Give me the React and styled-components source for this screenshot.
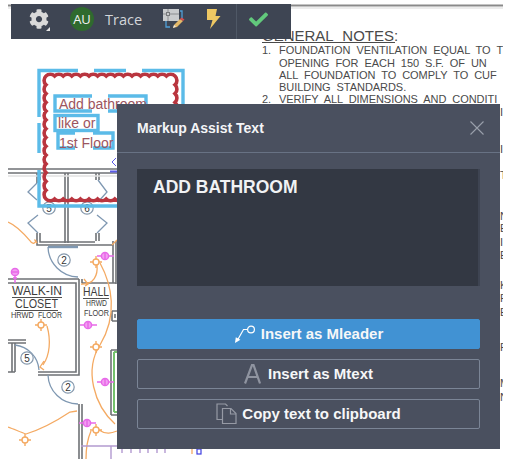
import React from "react";
import styled, { createGlobalStyle } from "styled-components";
import { FaCog, FaCheck } from "react-icons/fa";

const GlobalStyle = createGlobalStyle`
  html, body {
    margin: 0;
    padding: 0;
    background: #ffffff;
    font-family: "Liberation Sans", Arial, sans-serif;
  }
`;

const Page = styled.div`
  position: relative;
  width: 525px;
  height: 459px;
  overflow: hidden;
  background: #ffffff;
`;

const Sheet = styled.svg`
  display: block;
  width: 525px;
  height: 459px;
`;

const Toolbar = styled.div`
  position: absolute;
  left: 11px;
  top: 4px;
  width: 280px;
  height: 35px;
  display: flex;
  align-items: stretch;
  background: #3e4553;
`;

const ToolSlot = styled.div`
  position: relative;
  display: flex;
  align-items: center;
  justify-content: center;
  flex: none;
  width: ${(p) => p.$width}px;
  padding-bottom: 5px;
  box-sizing: border-box;
`;

const Caret = styled.span`
  position: absolute;
  right: 17px;
  bottom: 8px;
  width: 0;
  height: 0;
  border-left: 4px solid transparent;
  border-bottom: 4px solid #e4e4e4;
`;

const Avatar = styled.div`
  width: 24px;
  height: 24px;
  border-radius: 50%;
  background: #2f6a2e;
  color: #f2f2f2;
  font-family: "Open Sans", sans-serif;
  font-size: 13px;
  line-height: 24px;
  text-align: center;
`;

const TraceLabel = styled.span`
  font-family: "Open Sans", sans-serif;
  font-size: 14.5px;
  color: #d3d6da;
`;

const ToolDivider = styled.div`
  flex: none;
  width: 1px;
  margin-left: 8px;
  background: #4f5866;
`;

const Dialog = styled.div`
  position: absolute;
  left: 117px;
  top: 104px;
  width: 383px;
  height: 345px;
  display: flex;
  flex-direction: column;
  background: #4a505f;
`;

const DialogHeader = styled.div`
  display: flex;
  align-items: center;
  justify-content: space-between;
  height: 49px;
  padding: 0 16px 0 20px;
  box-sizing: border-box;
  border-bottom: 1px solid #687284;
  flex: none;
`;

const DialogTitle = styled.div`
  font-size: 14px;
  font-weight: 700;
  color: #f4f5f7;
`;

const DialogBody = styled.div`
  display: flex;
  flex-direction: column;
  padding: 16px 20px 0;
`;

const NoteText = styled.div`
  height: 117px;
  box-sizing: border-box;
  padding: 8px 16px;
  margin-bottom: 33px;
  background: #333843;
  border-right: 2px solid #3e4452;
  font-size: 17.5px;
  font-weight: 700;
  line-height: 20px;
  color: #f1f2f4;
`;

const ActionList = styled.div`
  display: flex;
  flex-direction: column;
  gap: 10px;
`;

const ActionButton = styled.button`
  display: flex;
  align-items: center;
  justify-content: center;
  gap: ${(p) => p.$gap}px;
  height: 30px;
  padding: 0 0 1px;
  box-sizing: border-box;
  border-radius: 2px;
  border: 1px solid ${(p) => (p.$primary ? "#4192d3" : "#7b8596")};
  background: ${(p) => (p.$primary ? "#4192d3" : "transparent")};
  color: #f6f7f8;
  font-family: "Liberation Sans", Arial, sans-serif;
  font-size: 15px;
  font-weight: 700;
`;

const WIRE = "#f4aa63";
const WALL = "#6f7276";
const DOOR = "#7f98b2";
const PINK = "#e76ae8";
const CAD = "#3d3d3d";
const NOTE_INK = "#4a4a4a";

// scalloped revision cloud, built edge by edge
const cloudPath = (x0, y0, x1, y1, step) => {
  let d = `M${x0} ${y0}`;
  const edge = (fx, fy, tx, ty) => {
    const len = Math.hypot(tx - fx, ty - fy);
    const n = Math.round(len / step);
    for (let i = 1; i <= n; i++) {
      const px = fx + ((tx - fx) * i) / n;
      const py = fy + ((ty - fy) * i) / n;
      d += ` A${step * 0.7} ${step * 0.7} 0 0 1 ${px.toFixed(1)} ${py.toFixed(1)}`;
    }
  };
  edge(x0, y0, x1, y0);
  edge(x1, y0, x1, y1);
  edge(x1, y1, x0, y1);
  edge(x0, y1, x0, y0);
  return d;
};

const NOTES = [
  { n: "1.", text: "FOUNDATION VENTILATION EQUAL TO T", y: 54 },
  { text: "OPENING FOR EACH 150 S.F. OF UN", y: 67 },
  { text: "ALL FOUNDATION TO COMPLY TO CUF", y: 79 },
  { text: "BUILDING STANDARDS.", y: 91 },
  { n: "2.", text: "VERIFY ALL DIMENSIONS AND CONDITI", y: 103 },
];

const EDGE_LETTERS = [
  ["I", 116], ["I", 153], ["T", 179], ["N", 220], ["E", 232], ["I", 246], ["E", 259],
  ["K", 289], ["F", 302], ["E", 316], ["F", 351], ["M", 387], ["N", 401],
];

const Node = ({ x, y }) => (
  <g stroke={WIRE} strokeWidth="1.4" fill="#fff">
    <path d={`M${x - 6} ${y}h12M${x} ${y - 6}v12`} />
    <circle cx={x} cy={y} r="3" />
  </g>
);

const Tag = ({ x, y, children }) => (
  <g>
    <circle cx={x} cy={y} r="6.2" fill="#fff" stroke="#8598ac" strokeWidth="1.2" />
    <text x={x} y={y + 3.5} fontSize="10" textAnchor="middle" fill="#333">{children}</text>
  </g>
);

const Fixture = ({ x, y, vertical }) => (
  <g stroke={PINK} strokeWidth="1.5" fill="none">
    <circle cx={x} cy={y} r="3.6" fill="#f39df3" />
    {vertical ? (
      <path d={`M${x - 3.5} ${y}h7M${x} ${y + 3}v8M${x - 2} ${y + 6}h4`} />
    ) : (
      <path d={`M${x} ${y - 3.5}v7M${x + 3} ${y}h6M${x - 8} ${y}h5`} />
    )}
  </g>
);

const CadLabel = ({ x, y, size, width, underline, children }) => (
  <g>
    <text
      x={x}
      y={y}
      fontSize={size}
      fill={CAD}
      textLength={width}
      lengthAdjust="spacingAndGlyphs"
    >
      {children}
    </text>
    {underline && <path d={`M${x} ${y + 2.5}h${width}`} stroke={CAD} strokeWidth="0.9" />}
  </g>
);

const FloorPlan = () => (
  <Sheet viewBox="0 0 525 459" fontFamily="'Liberation Sans', Arial, sans-serif">
    <defs>
      <clipPath id="sheet-clip">
        <rect x="8" y="0" width="495" height="459" />
      </clipPath>
    </defs>
    <g clipPath="url(#sheet-clip)">
      <path d="M8 5.5H503" stroke="#8a8a8a" strokeWidth="2" />
      <path d="M8 8H503" stroke="#e6e6e6" strokeWidth="1.5" />

      {/* general notes */}
      <text x="262" y="41" fontSize="15" fill={NOTE_INK} wordSpacing="5">
        GENERAL NOTES:
      </text>
      <path d="M262 42.5H395" stroke={NOTE_INK} strokeWidth="1" />
      {NOTES.map((line) => (
        <g key={line.y} fill={NOTE_INK} fontSize="11">
          {line.n && <text x="262" y={line.y}>{line.n}</text>}
          <text x="279" y={line.y} letterSpacing="-0.05" wordSpacing="3">{line.text}</text>
        </g>
      ))}
      {EDGE_LETTERS.map(([ch, y]) => (
        <text key={y} x="500" y={y} fontSize="11" fill={NOTE_INK}>{ch}</text>
      ))}

      {/* walls */}
      <g stroke={WALL} fill="none" strokeWidth="1.6">
        <path d="M8 169H117M8 173H117" />
        <path d="M65 173V243M68 173V243" />
        <path d="M37 173V183M40 173V180M96 173V180M99 173V180" />
        <path d="M37 233V245H113M40 233V242H95" />
        <path d="M96 233V241M99 233V241M113 241V283M116 241V284" />
        <path d="M8 279H79M8 283H76V372H38" />
        <path d="M79 279V375H38M82 283H116M82 279V283" />
        <path d="M8 340H26M8 343H26M12 343V372M15 343V372M8 372H15" />
        <path d="M79 404V459M82 404V459" />
        <path d="M112 311H117M112 321H117M112 311V321M115 314V318" />
        <path d="M111 350V415M111 350H117M111 415H117" />
      </g>
      <path d="M8 176H117" stroke="#e2e2e2" strokeWidth="1.5" />
      <path d="M114 352V412M114 352H117M114 412H117" stroke="#74c26c" strokeWidth="2" fill="none" />

      {/* doors */}
      <g stroke={DOOR} fill="none" strokeWidth="1.3">
        <path d="M37 183L28 192L37 200M98 180L107 192L98 202" />
        <path d="M38 215L28 223L38 233M97 215L107 223L97 233" />
        <path d="M48 247A31 31 0 0 0 78 277" />
        <path d="M15 345A27 27 0 0 1 39 370" />
        <path d="M48 375A30 30 0 0 0 78 404" />
        <path d="M48 247H78" strokeWidth="2.4" />
      </g>
      <Tag x={87} y={208}>6</Tag>
      <Tag x={49} y={208}>5</Tag>
      <Tag x={64} y={260}>2</Tag>
      <Tag x={27} y={358}>5</Tag>
      <Tag x={68} y={387}>2</Tag>

      {/* circuit wires */}
      <g stroke={WIRE} strokeWidth="1.3" fill="none">
        <path d="M8 222C18 226 26 236 31 242Q34 245 36 241Q33 238 37 243" />
        <path d="M97 265C98 275 94 285 81 284M84 279L88 284L85 286" />
        <path d="M100 263C112 285 118 315 100 345C84 370 94 405 115 424" />
        <path d="M47 326C51 340 50 355 43 365M44 361L40 367L44 370" />
        <path d="M8 427C14 429 20 432 26 434C42 429 58 420 70 412L77 411" />
        <path d="M99 430C106 435 112 433 117 431M91 431C87 440 86 450 86 459" />
        <path d="M192 449V454" />
        <path d="M112 245L117 240" />
      </g>
      <Node x={96} y={262} />
      <Node x={41} y={325} />
      <Node x={96} y={347} />
      <Node x={25} y={440} />
      <Node x={96} y={430} />

      <Fixture x={15} y={272} vertical />
      <Fixture x={88} y={325} />
      <Fixture x={105} y={256} />
      <Fixture x={105} y={382} />
      <Fixture x={87} y={423} />

      <path d="M81 446H117M111 446V459" stroke="#b39ad0" strokeWidth="1.4" fill="none" />
      <path d="M122 449v4M131 449v4M140 449v4M148 449v4M157 449v4M165 449v4" stroke="#b39ad0" strokeWidth="1.4" />
      <rect x="197" y="449" width="4" height="5" fill="none" stroke="#3f3fe0" strokeWidth="1.2" />
      <path d="M110 171.5H117" stroke="#5a5ae8" strokeWidth="2" />
      <path d="M116 158L112 162L116 166" stroke="#5a5ae8" strokeWidth="1" fill="none" />

      {/* room labels */}
      <CadLabel x={12} y={295} size={12.5} width={50} underline>WALK-IN</CadLabel>
      <CadLabel x={15} y={308} size={12.5} width={43} underline>CLOSET</CadLabel>
      <CadLabel x={11} y={318} size={9} width={23}>HRWD</CadLabel>
      <CadLabel x={38} y={318} size={9} width={24}>FLOOR</CadLabel>
      <CadLabel x={83} y={296} size={12.5} width={26} underline>HALL</CadLabel>
      <CadLabel x={86} y={306} size={9} width={21}>HRWD</CadLabel>
      <CadLabel x={84} y={316} size={9} width={25}>FLOOR</CadLabel>

      {/* markup: selection frames, cloud and note */}
      <path d={cloudPath(46, 76, 175, 199, 8.6)} fill="none" stroke="#b9353f" strokeWidth="3.6" />
      <path
        d="M39 117V70.5H78M94 70.5H126M142 70.5H183V104M39 123V153M39 170V206H117"
        fill="none"
        stroke="#5bbbe8"
        strokeWidth="3.4"
      />
      <g fill="none" stroke="#5bbbe8" strokeWidth="3.4">
        <path d="M92 96H55V111H92M108 96H146V111H108" />
        <rect x="55" y="115.5" width="43" height="15" />
        <path d="M75 133H58V148H75M93 148H113V133H93" />
      </g>
      <g fontSize="14" fill="#9c5560">
        <text x="59" y="109">Add bathroom</text>
        <text x="58" y="128">like or</text>
        <text x="59" y="148">1st Floor</text>
      </g>
    </g>
  </Sheet>
);

const TraceIcon = () => (
  <svg width="22" height="21" viewBox="0 0 22 21">
    <rect x="0" y="0" width="16" height="12" fill="#c9cbcd" />
    <path d="M5 0v12M0 5h16" stroke="#8b8d90" strokeWidth="1" />
    <rect x="3.5" y="3.5" width="3" height="3" fill="#c9cbcd" stroke="#77797c" />
    <path d="M3 12v6h4M17 2h2v8" stroke="#4f9fd8" strokeWidth="1.3" fill="none" />
    <path d="M10 19l1-3 6-6 3 2-6 6z" fill="#e3b868" />
    <path d="M17 10l1.5-1.5 3 2L20 12z" fill="#d84f4f" />
    <path d="M10 19l1-3 2 1.5z" fill="#e8e8e8" />
  </svg>
);

const BoltIcon = () => (
  <svg width="15" height="20" viewBox="0 0 15 20">
    <path d="M1 0H11L9.5 7H14.5L4 20L6.5 11H1z" fill="#eec863" />
  </svg>
);

const LeaderIcon = () => (
  <svg width="22" height="20" viewBox="0 0 22 20">
    <circle cx="17" cy="5.5" r="3.4" fill="none" stroke="#fff" strokeWidth="1.2" />
    <path d="M13.5 5.5H9.5L3 17" fill="none" stroke="#fff" strokeWidth="1.2" />
    <path d="M1 19L1.8 13.2L6.4 15.8z" fill="#fff" />
  </svg>
);

const TextIcon = () => (
  <svg width="17" height="20" viewBox="0 0 17 20">
    <path d="M1 19.5L8 1H9.5L16 19.5M3.5 13H13.5" fill="none" stroke="#8f94a0" strokeWidth="2.2" />
  </svg>
);

const CopyIcon = () => (
  <svg width="21" height="21" viewBox="0 0 21 21">
    <g fill="none" stroke="#969aa5" strokeWidth="1.2">
      <path d="M6 16.5H1V1H9.5L11.5 3" />
      <path d="M6.5 5.5H15L20 10.5V20.5H6.5z" />
      <path d="M14.5 5.5V11H20" />
    </g>
  </svg>
);

const CloseIcon = () => (
  <svg width="14" height="14" viewBox="0 0 14 14">
    <path d="M0.5 0.5L13.5 13.5M13.5 0.5L0.5 13.5" stroke="#9aa0ab" strokeWidth="1.1" />
  </svg>
);

const App = () => (
  <Page>
    <GlobalStyle />
    <FloorPlan />
    <Toolbar>
      <ToolSlot $width={56}>
        <FaCog size={20} color="#d9d9d9" />
        <Caret />
      </ToolSlot>
      <ToolSlot $width={30}>
        <Avatar>AU</Avatar>
      </ToolSlot>
      <ToolSlot $width={53}>
        <TraceLabel>Trace</TraceLabel>
      </ToolSlot>
      <ToolSlot $width={48}>
        <TraceIcon />
      </ToolSlot>
      <ToolSlot $width={30}>
        <BoltIcon />
      </ToolSlot>
      <ToolDivider />
      <ToolSlot $width={43}>
        <FaCheck size={19} color="#62c97c" />
      </ToolSlot>
    </Toolbar>
    <Dialog>
      <DialogHeader>
        <DialogTitle>Markup Assist Text</DialogTitle>
        <CloseIcon />
      </DialogHeader>
      <DialogBody>
        <NoteText>ADD BATHROOM</NoteText>
        <ActionList>
          <ActionButton $primary $gap={5}>
            <LeaderIcon />
            Insert as Mleader
          </ActionButton>
          <ActionButton $gap={7}>
            <TextIcon />
            Insert as Mtext
          </ActionButton>
          <ActionButton $gap={5}>
            <CopyIcon />
            Copy text to clipboard
          </ActionButton>
        </ActionList>
      </DialogBody>
    </Dialog>
  </Page>
);

export default App;
